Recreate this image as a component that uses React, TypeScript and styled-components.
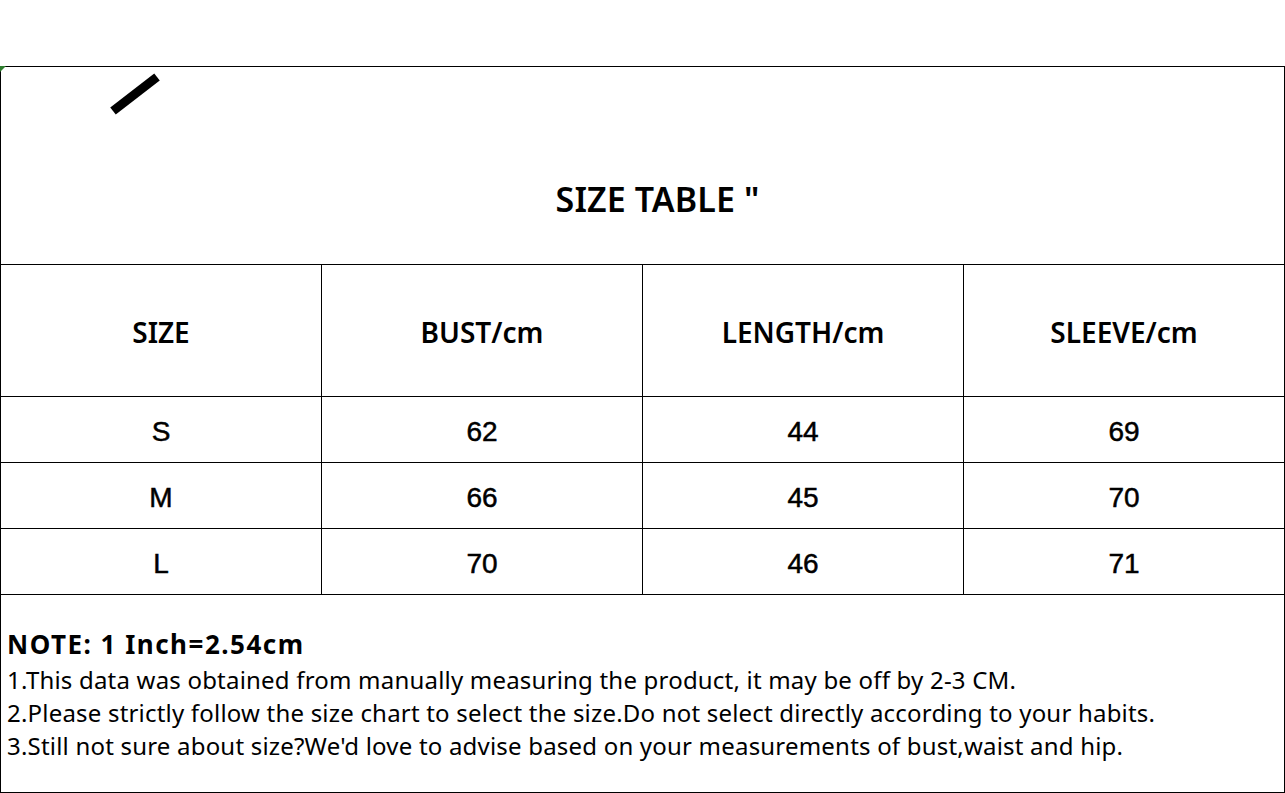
import React from "react";
import styled, { createGlobalStyle } from "styled-components";

const GlobalStyle = createGlobalStyle`
  html, body { margin: 0; padding: 0; background: #ffffff; }
  body { font-family: "Noto Sans", "Open Sans", sans-serif; color: #000; }
  * { box-sizing: border-box; }
`;

const Page = styled.div`
  width: 1285px;
  height: 793px;
  padding-top: 66px;
  overflow: hidden;
`;

const Sheet = styled.div`
  position: relative;
  width: 1285px;
  border: 1px solid #000;
  display: flex;
  flex-direction: column;
  &::before {
    content: "";
    position: absolute;
    left: -1px;
    top: -1px;
    width: 0;
    height: 0;
    border-top: 6px solid #2e7d2e;
    border-right: 6px solid transparent;
  }
`;

const TitleSection = styled.section`
  height: 198px;
  border-bottom: 1px solid #000;
  display: flex;
  flex-direction: column;
  padding-top: 5px;
`;

const SlashMark = styled.svg`
  display: block;
  width: 54px;
  height: 46px;
  margin-left: 106px;
`;

const Title = styled.h1`
  margin: 61px 0 0;
  font-family: "Noto Sans", sans-serif;
  font-weight: 600;
  font-size: 34px;
  letter-spacing: 0.1px;
  line-height: 40px;
  text-align: center;
  padding-left: 30px;
`;

const Row = styled.div<{ $height: number }>`
  display: grid;
  grid-template-columns: 320px 321px 321px 321px;
  height: ${(p) => p.$height}px;
  border-bottom: 1px solid #000;
`;

const Cell = styled.div<{ $head?: boolean }>`
  display: flex;
  align-items: center;
  justify-content: center;
  & + & { border-left: 1px solid #000; }
  font-family: ${(p) => (p.$head ? `"Noto Sans", sans-serif` : `"Liberation Sans", Arial, sans-serif`)};
  font-weight: ${(p) => (p.$head ? 600 : 400)};
  font-size: 28px;
  -webkit-text-stroke: ${(p) => (p.$head ? 0 : 0.5)}px #000;
  padding-top: ${(p) => (p.$head ? 2 : 4)}px;
`;

const NoteSection = styled.section`
  height: 197px;
  padding: 30px 0 0 6px;
  display: flex;
  flex-direction: column;
`;

const NoteHeading = styled.div`
  font-family: "Noto Sans", sans-serif;
  font-weight: 700;
  font-size: 26px;
  letter-spacing: 1.5px;
  line-height: 38px;
`;

const NoteLine = styled.div`
  font-family: "Noto Sans", sans-serif;
  font-weight: 400;
  font-size: 24px;
  letter-spacing: 0.2px;
  line-height: 33px;
  white-space: nowrap;
`;

const header = ["SIZE", "BUST/cm", "LENGTH/cm", "SLEEVE/cm"];
const rows = [
  ["S", "62", "44", "69"],
  ["M", "66", "45", "70"],
  ["L", "70", "46", "71"],
];
const notes = [
  "1.This data was obtained from manually measuring the product, it may be off by 2-3 CM.",
  "2.Please strictly follow the size chart to select the size.Do not select directly according to your habits.",
  "3.Still not sure about size?We'd love to advise based on your measurements of bust,waist and hip.",
];

export default function App() {
  return (
    <>
      <GlobalStyle />
      <Page>
        <Sheet>
          <TitleSection>
            <SlashMark viewBox="0 0 54 46">
              <line x1="6" y1="39" x2="50" y2="5" stroke="#000" strokeWidth="9" />
            </SlashMark>
            <Title>SIZE TABLE "</Title>
          </TitleSection>
          <Row $height={132}>
            {header.map((h) => (
              <Cell key={h} $head>
                {h}
              </Cell>
            ))}
          </Row>
          {rows.map((r) => (
            <Row key={r[0]} $height={66}>
              {r.map((v, i) => (
                <Cell key={i}>{v}</Cell>
              ))}
            </Row>
          ))}
          <NoteSection>
            <NoteHeading>NOTE: 1 Inch=2.54cm</NoteHeading>
            {notes.map((n) => (
              <NoteLine key={n}>{n}</NoteLine>
            ))}
          </NoteSection>
        </Sheet>
      </Page>
    </>
  );
}
